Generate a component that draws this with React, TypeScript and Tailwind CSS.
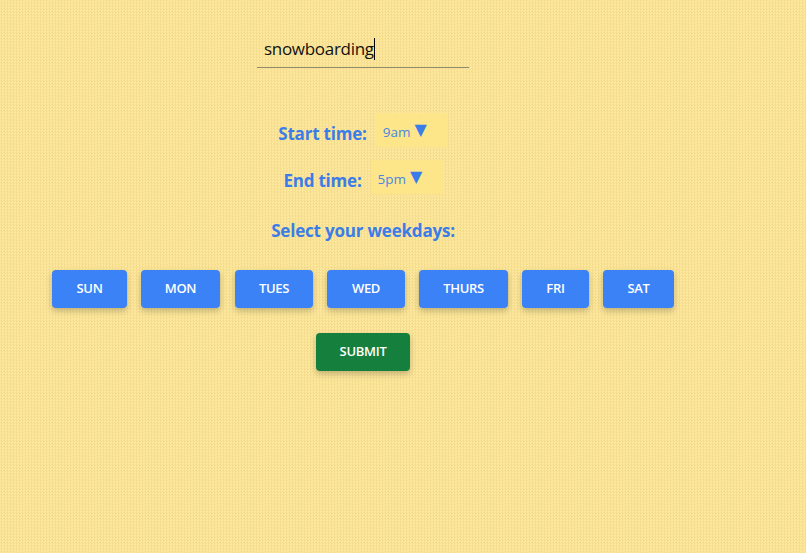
const days = ["SUN", "MON", "TUES", "WED", "THURS", "FRI", "SAT"];
const dayWidths: Record<string, string> = {
  SUN: "w-[75px]",
  MON: "w-[79px]",
  TUES: "ml-px w-[78px]",
  WED: "w-[78px]",
  THURS: "w-[89px]",
  FRI: "w-[67px]",
  SAT: "w-[71px]",
};

function TimeRow({ label, value }: { label: string; value: string }) {
  return (
    <div className="flex h-[34px] items-center gap-[9px]">
      <span className="mt-[7px] text-[17px] leading-none font-bold tracking-[-0.2px] text-[#3b7de8]">{label}</span>
      <button type="button" className="flex h-[34px] w-[72px] items-start gap-[4px] bg-[#fde68a] pt-[9px] pl-[7px] text-[13.5px] leading-[20px] text-[#4a86e0]">
        <span>{value}</span>
        <span className="font-['DejaVu_Sans',sans-serif] text-[16px] leading-[16px] text-[#3b7de8]">▼</span>
      </button>
    </div>
  );
}

export default function App() {
  return (
    <div className="h-[553px] w-[806px] overflow-hidden bg-[#fbe59a] bg-[repeating-conic-gradient(#f5dc8e_0%_25%,#fdea9f_0%_50%)] bg-[length:3px_3px] font-['Open_Sans','Noto_Sans',sans-serif]">
      <div className="flex w-[726px] flex-col items-center pt-[30px]">
        <div className="flex h-[38px] w-[212px] items-center border-b border-[#8f8a70] pl-[7px] text-[17px] tracking-[-0.3px] text-[#111111]">
          <span>snowboarding</span>
          <span className="h-[22px] w-px bg-black" />
        </div>

        <div className="mt-[45px] flex flex-col items-center gap-[13px]">
          <TimeRow label="Start time:" value="9am" />
          <TimeRow label="End time:" value="5pm" />
        </div>

        <h2 className="mt-[25px] text-[17px] leading-[24px] font-bold tracking-[-0.2px] text-[#3b7de8]">Select your weekdays:</h2>

        <div className="mt-[27px] flex gap-[14px]">
          {days.map((day) => (
            <button
              key={day}
              type="button"
              className={`h-[38px] rounded-[4px] bg-[#3b82f6] text-[13px] font-semibold tracking-[-0.3px] text-white shadow-[0_3px_6px_rgba(0,0,0,0.22)] ${dayWidths[day]}`}
            >
              {day}
            </button>
          ))}
        </div>

        <button
          type="button"
          className="mt-[25px] h-[38px] w-[94px] rounded-[4px] bg-[#15803d] text-[13px] font-semibold tracking-[-0.3px] text-white shadow-[0_3px_6px_rgba(0,0,0,0.22)]"
        >
          SUBMIT
        </button>
      </div>
    </div>
  );
}
